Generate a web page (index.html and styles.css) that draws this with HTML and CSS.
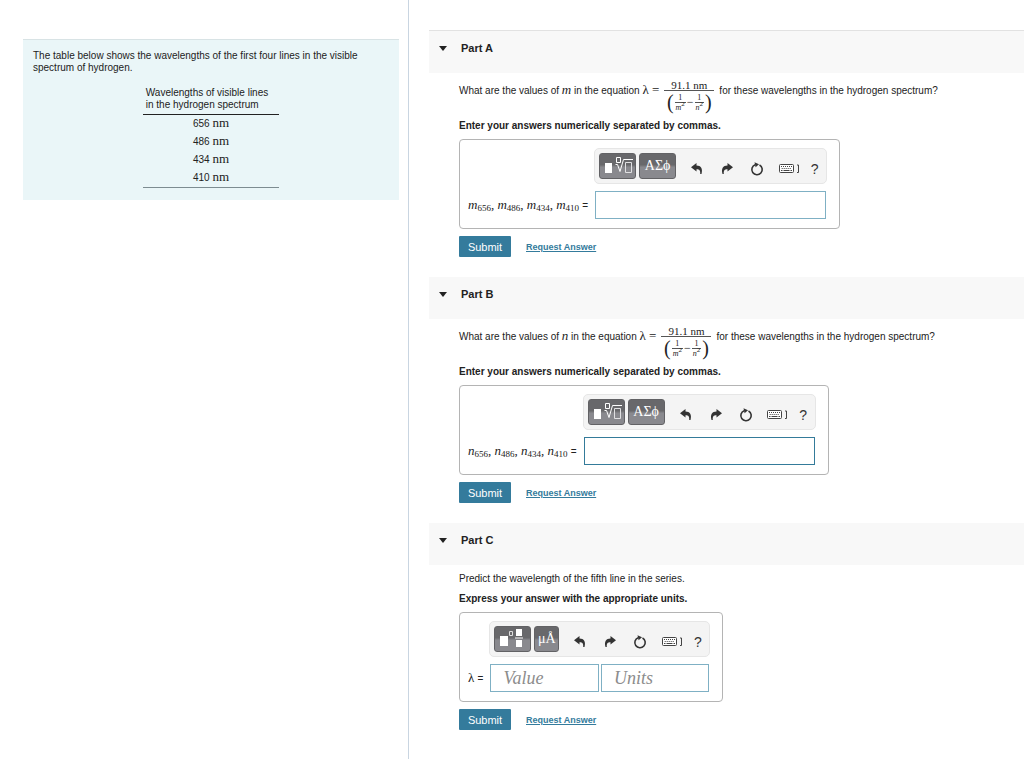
FILE: index.html
```html
<!DOCTYPE html>
<html lang="en">
<head>
<meta charset="utf-8">
<title>Hydrogen spectrum</title>
<link rel="stylesheet" href="styles.css">
</head>
<body>
<svg class="sprite" aria-hidden="true">
  <symbol id="undo" viewBox="0 0 14 14"><path d="M1 5.200 6.500 1v2.400c4.500 0 6.500 3 5 8.600h-1.300C10.500 8.500 9.500 7.200 6.500 7.200v2.400z" fill="#333"/></symbol>
  <symbol id="redo" viewBox="0 0 14 14"><path d="M13 5.200 7.500 1v2.400c-4.500 0-6.500 3-5 8.600h1.300C3.500 8.500 4.500 7.200 7.500 7.200v2.400z" fill="#333"/></symbol>
  <symbol id="reset" viewBox="0 0 14 14"><path d="M9.500 3A5.200 5.200 0 1 1 5.200 2.700" fill="none" stroke="#333" stroke-width="1.600"/><path d="M4.500.2 9 2.300 5.600 5.300z" fill="#333"/></symbol>
  <symbol id="keys" viewBox="0 0 22 12"><rect x=".5" y="1.500" width="14" height="8" rx="1" fill="#fff" stroke="#444"/><path d="M2 3.500h11M2.700 5.500h10" stroke="#444" stroke-dasharray="1 1"/><path d="M2 7.500h1.500m1 0h6m1 0H13" stroke="#444"/><path d="M18 2h1.500v7.500H18" fill="none" stroke="#444"/></symbol>
  <symbol id="root" viewBox="0 0 35 24"><path d="M5 9h7v10H5z" fill="#fff"/><path d="M16.500 3.500h4v5h-4z" fill="none" stroke="#fff"/><path d="M15.500 10.500h2l2.500 7L23.500 5.500H33" fill="none" stroke="#fff"/><path d="M25.500 8.500h6v10h-6z" fill="none" stroke="#e0e0e2"/></symbol>
  <symbol id="unit" viewBox="0 0 35 24"><path d="M5 9h8v10H5zM21 2h6v7h-6zM21 13h6v7h-6z" fill="#fff"/><path d="M14.500 4.500h3v4h-3z" fill="none" stroke="#ddd"/><path d="M20 11h8" stroke="#fff"/></symbol>
</svg>
<div class="layout">
  <aside class="intro">
    <div class="intro-card">
      <p class="intro-text">The table below shows the wavelengths of the first four lines in the visible spectrum of hydrogen.</p>
      <table class="lines">
        <thead><tr><th scope="col">Wavelengths of visible lines<br>in the hydrogen spectrum</th></tr></thead>
        <tbody>
          <tr><td>656 <span class="unit">nm</span></td></tr>
          <tr><td>486 <span class="unit">nm</span></td></tr>
          <tr><td>434 <span class="unit">nm</span></td></tr>
          <tr><td>410 <span class="unit">nm</span></td></tr>
        </tbody>
      </table>
    </div>
  </aside>
  <main class="parts">
    <section class="part">
      <h2 class="part-head"><span class="caret"></span>Part A</h2>
      <form class="part-body">
        <div class="question has-math">
          <span class="question-text">What are the values of <i class="var">m</i> in the equation <span class="var">λ =</span></span>
          <span class="fraction"><span class="numerator">91.1 nm</span><span class="denominator"><span class="paren">(</span><span class="small-frac"><span>1</span><span class="under"><i>m</i><sup>2</sup></span></span><span class="minus">−</span><span class="small-frac"><span>1</span><span class="under"><i>n</i><sup>2</sup></span></span><span class="paren">)</span></span></span>
          <span class="question-text">for these wavelengths in the hydrogen spectrum?</span>
        </div>
        <p class="prompt">Enter your answers numerically separated by commas.</p>
        <div class="answer">
          <div class="toolbar">
            <button type="button" class="tool" aria-label="Templates"><svg class="tool-art"><use href="#root"/></svg></button>
            <button type="button" class="tool">ΑΣϕ</button>
            <div class="icons">
              <button type="button" class="icon" aria-label="Undo"><svg><use href="#undo"/></svg></button>
              <button type="button" class="icon" aria-label="Redo"><svg><use href="#redo"/></svg></button>
              <button type="button" class="icon" aria-label="Reset"><svg><use href="#reset"/></svg></button>
              <button type="button" class="icon keys" aria-label="Keyboard shortcuts"><svg><use href="#keys"/></svg></button>
              <button type="button" class="icon help">?</button>
            </div>
          </div>
          <label class="label" for="a"><i>m</i><sub>656</sub>, <i>m</i><sub>486</sub>, <i>m</i><sub>434</sub>, <i>m</i><sub>410</sub> <span class="equals">=</span></label>
          <div class="fields"><input class="field" id="a" type="text"></div>
        </div>
        <div class="actions"><button type="button" class="submit">Submit</button><a class="request" href="#">Request Answer</a></div>
      </form>
    </section>
    <section class="part">
      <h2 class="part-head"><span class="caret"></span>Part B</h2>
      <form class="part-body">
        <div class="question has-math">
          <span class="question-text">What are the values of <i class="var">n</i> in the equation <span class="var">λ =</span></span>
          <span class="fraction"><span class="numerator">91.1 nm</span><span class="denominator"><span class="paren">(</span><span class="small-frac"><span>1</span><span class="under"><i>m</i><sup>2</sup></span></span><span class="minus">−</span><span class="small-frac"><span>1</span><span class="under"><i>n</i><sup>2</sup></span></span><span class="paren">)</span></span></span>
          <span class="question-text">for these wavelengths in the hydrogen spectrum?</span>
        </div>
        <p class="prompt">Enter your answers numerically separated by commas.</p>
        <div class="answer">
          <div class="toolbar">
            <button type="button" class="tool" aria-label="Templates"><svg class="tool-art"><use href="#root"/></svg></button>
            <button type="button" class="tool">ΑΣϕ</button>
            <div class="icons">
              <button type="button" class="icon" aria-label="Undo"><svg><use href="#undo"/></svg></button>
              <button type="button" class="icon" aria-label="Redo"><svg><use href="#redo"/></svg></button>
              <button type="button" class="icon" aria-label="Reset"><svg><use href="#reset"/></svg></button>
              <button type="button" class="icon keys" aria-label="Keyboard shortcuts"><svg><use href="#keys"/></svg></button>
              <button type="button" class="icon help">?</button>
            </div>
          </div>
          <label class="label" for="b"><i>n</i><sub>656</sub>, <i>n</i><sub>486</sub>, <i>n</i><sub>434</sub>, <i>n</i><sub>410</sub> <span class="equals">=</span></label>
          <div class="fields"><input class="field strong" id="b" type="text"></div>
        </div>
        <div class="actions"><button type="button" class="submit">Submit</button><a class="request" href="#">Request Answer</a></div>
      </form>
    </section>
    <section class="part">
      <h2 class="part-head"><span class="caret"></span>Part C</h2>
      <form class="part-body">
        <div class="question">Predict the wavelength of the fifth line in the series.</div>
        <p class="prompt">Express your answer with the appropriate units.</p>
        <div class="answer">
          <div class="toolbar">
            <button type="button" class="tool" aria-label="Templates"><svg class="tool-art"><use href="#unit"/></svg></button>
            <button type="button" class="tool narrow">μÅ</button>
            <div class="icons">
              <button type="button" class="icon" aria-label="Undo"><svg><use href="#undo"/></svg></button>
              <button type="button" class="icon" aria-label="Redo"><svg><use href="#redo"/></svg></button>
              <button type="button" class="icon" aria-label="Reset"><svg><use href="#reset"/></svg></button>
              <button type="button" class="icon keys" aria-label="Keyboard shortcuts"><svg><use href="#keys"/></svg></button>
              <button type="button" class="icon help">?</button>
            </div>
          </div>
          <label class="label lambda" for="c">λ <span class="equals">=</span></label>
          <div class="fields"><input class="field" id="c" type="text" placeholder="Value"><input class="field" type="text" placeholder="Units" aria-label="Units"></div>
        </div>
        <div class="actions"><button type="button" class="submit">Submit</button><a class="request" href="#">Request Answer</a></div>
      </form>
    </section>
  </main>
</div>
</body>
</html>
```
FILE: styles.css
```css
* { box-sizing: border-box; }
body { margin: 0; color: #222; background: #fff; font: 10px/12px "Liberation Sans", Arial, sans-serif; }
p, h2 { margin: 0; }
button, input { font: inherit; margin: 0; padding: 0; border: 0; }
.sprite { position: absolute; width: 0; height: 0; }
.layout { display: grid; grid-template-columns: minmax(0, 409fr) minmax(0, 615fr); min-height: 100vh; }
.intro { padding: 39px 9px 0 23px; border-right: 1px solid #c9d5e1; }
.intro-card { background: #eaf6f8; border-top: 1px solid #d8e3e5; padding: 10px 10px 12px; }
.lines { margin: 11px auto 0; border-collapse: separate; border-spacing: 0; border-bottom: 1px solid #7d8c91; }
.lines th { padding: 2px 11px 3px 3px; font-weight: 400; text-align: left; border-bottom: 1px solid #222; }
.lines td { padding: 0; height: 18px; text-align: center; line-height: 18px; }
.unit { font-family: "Liberation Serif", serif; font-size: 13px; line-height: 12px; }

.parts { padding: 30px 0 28px 20px; }
.part-head { display: flex; align-items: center; gap: 14px; height: 42px; padding: 0 0 8px 10px; background: #f8f8f8; font-size: 11px; line-height: 14px; }
.part:first-child .part-head { height: 43px; border-top: 1px solid #e2e2e2; }
.caret { border: 4px solid transparent; border-top: 5px solid #222; border-bottom: 0; }
.part-body { padding: 7px 12px 20px 30px; }
.question { line-height: 14px; }
.question.has-math { display: flex; align-items: flex-start; gap: 5px; }
.has-math .question-text { padding-top: 4px; }
.var { font: 13px/12px "Liberation Serif", serif; }
i.var { font-style: italic; }
.fraction { font: 11px/10px "Liberation Serif", serif; text-align: center; }
.numerator { display: block; padding: 0 7px; }
.denominator { display: flex; align-items: center; justify-content: center; gap: 1px; height: 23px; border-top: 1px solid #555; }
.paren { font-size: 20px; line-height: 20px; }
.small-frac { display: flex; flex-direction: column; font-size: 8px; line-height: 9px; }
.under { border-top: 1px solid #555; padding: 0 1px; }
.under sup { font-size: 7px; line-height: 1px; }
.minus { font-size: 12px; }
.prompt { margin-top: 7px; font-weight: 700; }

.answer { display: grid; grid-template-columns: auto auto; column-gap: 6px; row-gap: 7px; width: fit-content; margin-top: 7px; padding: 8px 12px 9px 8px; border: 1px solid #b4b4b4; border-radius: 4px; }
.toolbar { grid-column: 2; display: flex; align-items: center; gap: 3px; height: 36px; padding: 0 4px; background: #f4f4f4; border: 1px solid #e6e6e6; border-radius: 5px; }
.tool { width: 37px; height: 26px; border: 1px solid #626265; border-radius: 3px; color: #fff; background: linear-gradient(#68686b 0 45%, #89898e 55% 100%); font: 14px/22px "Liberation Serif", serif; }
.tool.narrow { width: 25px; }
.tool-art { display: block; width: 35px; height: 24px; }
.icons { display: flex; align-items: center; padding: 6px 0 0 3px; }
.icon { display: grid; place-items: center; width: 30px; height: 20px; background: none; }
.icon svg { width: 14px; height: 14px; }
.icon.keys { width: 35px; }
.icon.keys svg { width: 22px; height: 12px; }
.icon.help { width: 15px; color: #333; font-size: 14px; line-height: 16px; }
.label { grid-column: 1; align-self: center; white-space: nowrap; font: 13px/20px "Liberation Serif", serif; }
.label sub { font-size: 9px; line-height: 1px; vertical-align: -2px; }
.equals { font: 10px/12px "Liberation Sans", Arial, sans-serif; }
.fields { display: flex; gap: 2px; padding: 0 1px; }
.field { flex: 1; width: 0; min-width: 0; height: 28px; padding: 0 12px; border: 1px solid #7fb0c4; background: #fff; font: 18px/26px "Liberation Serif", serif; }
.field.strong { border-color: #347b9a; }
.field::placeholder { color: #8c8c8c; opacity: 1; font-style: italic; }
.actions { display: flex; align-items: center; gap: 15px; margin-top: 7px; }
.submit { width: 52px; height: 21px; border-radius: 1px; background: #347b9c; color: #fff; font-size: 11px; }
.request { color: #347b9c; font-size: 9px; font-weight: 700; }
```
